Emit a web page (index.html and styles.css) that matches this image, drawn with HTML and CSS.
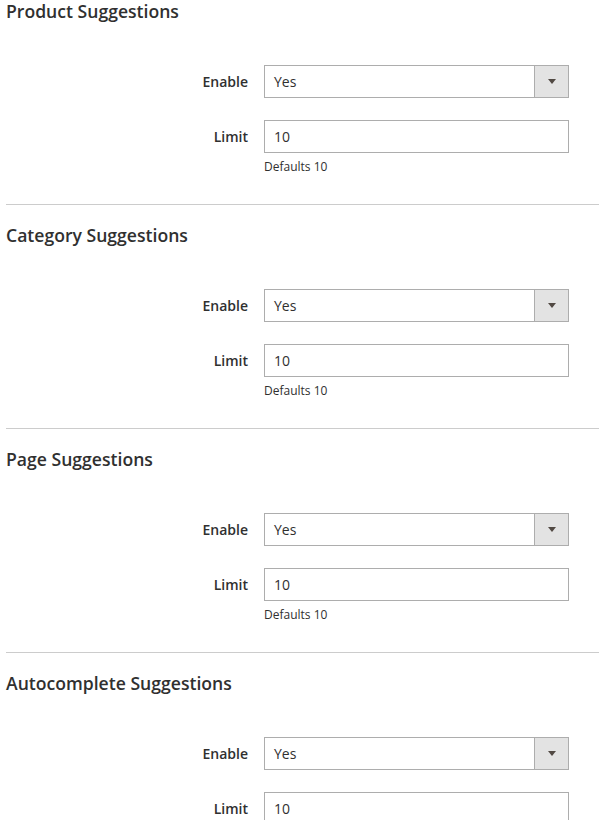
FILE: index.html
```html
<!DOCTYPE html>
<html>
<head>
<meta charset="utf-8">
<link rel="stylesheet" href="styles.css">
</head>
<body>
<div class="page">
  <section class="group">
    <h2 class="group-title">Product Suggestions</h2>
    <div class="fields">
      <div class="field">
        <label class="field-label">Enable</label>
        <div class="select"><span class="select-value">Yes</span><span class="select-btn"><span class="arrow"></span></span></div>
      </div>
      <div class="field field-limit">
        <label class="field-label">Limit</label>
        <div class="input">10</div>
      </div>
      <div class="note">Defaults 10</div>
    </div>
  </section>
  <section class="group">
    <h2 class="group-title">Category Suggestions</h2>
    <div class="fields">
      <div class="field">
        <label class="field-label">Enable</label>
        <div class="select"><span class="select-value">Yes</span><span class="select-btn"><span class="arrow"></span></span></div>
      </div>
      <div class="field field-limit">
        <label class="field-label">Limit</label>
        <div class="input">10</div>
      </div>
      <div class="note">Defaults 10</div>
    </div>
  </section>
  <section class="group">
    <h2 class="group-title">Page Suggestions</h2>
    <div class="fields">
      <div class="field">
        <label class="field-label">Enable</label>
        <div class="select"><span class="select-value">Yes</span><span class="select-btn"><span class="arrow"></span></span></div>
      </div>
      <div class="field field-limit">
        <label class="field-label">Limit</label>
        <div class="input">10</div>
      </div>
      <div class="note">Defaults 10</div>
    </div>
  </section>
  <section class="group">
    <h2 class="group-title">Autocomplete Suggestions</h2>
    <div class="fields">
      <div class="field">
        <label class="field-label">Enable</label>
        <div class="select"><span class="select-value">Yes</span><span class="select-btn"><span class="arrow"></span></span></div>
      </div>
      <div class="field field-limit">
        <label class="field-label">Limit</label>
        <div class="input">10</div>
      </div>
      <div class="note">Defaults 10</div>
    </div>
  </section>
</div>
</body>
</html>
```
FILE: styles.css
```css
* { box-sizing: border-box; }
html, body { margin: 0; padding: 0; background: #fff; }
body {
  font-family: "Open Sans", "Liberation Sans", sans-serif;
  color: #303030;
  overflow: hidden;
}
.page {
  margin-left: 6px;
}
.group {
  border-bottom: 1px solid #cccccc;
  padding-bottom: 29px;
  margin-bottom: 19px;
}
.group-title {
  margin: 0;
  font-size: 17.6px;
  line-height: 22px;
  font-weight: 600;
  color: #303030;
}
.fields {
  margin-top: 43px;
}
.field {
  display: grid;
  grid-template-columns: 258px 305px;
  align-items: center;
}
.field-limit {
  margin-top: 22px;
}
.field-label {
  text-align: right;
  padding-right: 16px;
  font-size: 14px;
  font-weight: 600;
  color: #303030;
}
.select, .input {
  height: 33px;
  border: 1px solid #adadad;
  background: #fff;
  font-size: 14px;
  color: #303030;
}
.select {
  display: flex;
  align-items: stretch;
}
.select-value {
  flex: 1;
  padding-left: 9px;
  line-height: 31px;
}
.select-btn {
  width: 34px;
  background: #e3e3e3;
  border-left: 1px solid #adadad;
  display: flex;
  align-items: center;
  justify-content: center;
}
.arrow {
  width: 0;
  height: 0;
  border-left: 4px solid transparent;
  border-right: 4px solid transparent;
  border-top: 5px solid #514943;
}
.input {
  padding-left: 9px;
  line-height: 31px;
}
.note {
  margin-left: 258px;
  margin-top: 6px;
  font-size: 12px;
  line-height: 16px;
  color: #303030;
}
```
